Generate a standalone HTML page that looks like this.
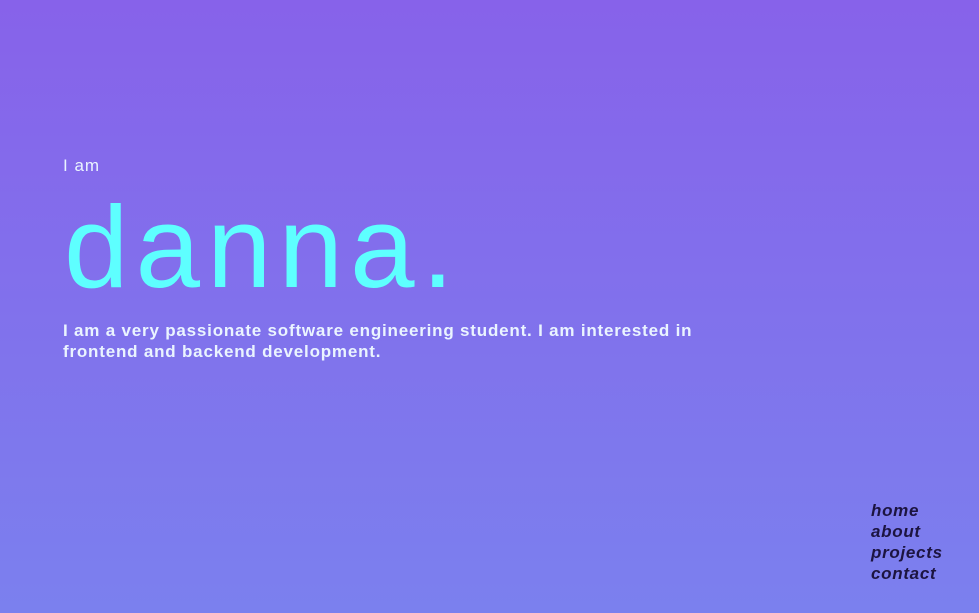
<!DOCTYPE html>
<html><head><meta charset="utf-8"><style>
html,body{margin:0;padding:0;width:979px;height:613px;overflow:hidden}
body{background:linear-gradient(180deg,#8762ea 0%,#7b80ee 100%);font-family:"Liberation Sans",sans-serif;position:relative}
.iam{position:absolute;left:63px;top:156px;font-size:17px;color:#eaf4ff;letter-spacing:1px}
.name{position:absolute;left:64px;top:189px;font-size:116px;color:#5effff;line-height:1;letter-spacing:7px}
.desc{position:absolute;left:63px;top:320px;font-size:17px;line-height:21px;color:#eaf4ff;font-weight:bold;letter-spacing:0.8px;width:760px}
.nav{position:absolute;left:871px;top:500px;font-size:17px;line-height:21px;font-style:italic;font-weight:bold;color:#1c1440;letter-spacing:0.7px}
</style></head><body>
<div class="iam">I am</div>
<div class="name">danna.</div>
<div class="desc">I am a very passionate software engineering student. I am interested in<br>frontend and backend development.</div>
<div class="nav">home<br>about<br>projects<br>contact</div>
</body></html>
